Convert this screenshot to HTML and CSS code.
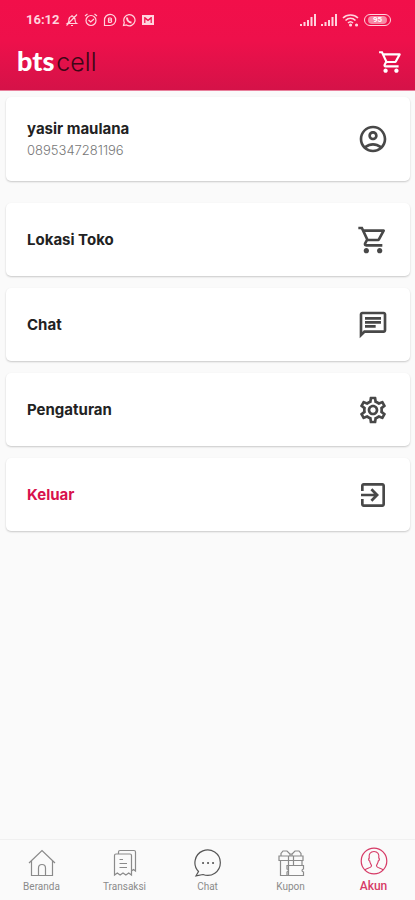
FILE: index.html
```html
<!DOCTYPE html>
<html lang="id">
<head>
  <meta charset="UTF-8" />
  <meta name="viewport" content="width=device-width, initial-scale=1.0"/>
  <title>Akun</title>
  <link rel="stylesheet" href="styles.css">
</head>
<body>
  <svg width="0" height="0" class="sprite" aria-hidden="true">
    <symbol id="cart" viewBox="0 0 24 24">
      <path d="M15.55 13c.75 0 1.41-.41 1.75-1.03l3.58-6.49A.996.996 0 0 0 20.01 4H5.21l-.94-2H1v2h2l3.6 7.59-1.35 2.44C4.52 15.37 5.48 17 7 17h12v-2H7l1.1-2h7.45zM6.16 6h12.15l-2.76 5H8.53L6.16 6zM7 18c-1.1 0-1.99.9-1.99 2S5.9 22 7 22s2-.9 2-2-.9-2-2-2zm10 0c-1.1 0-1.99.9-1.99 2s.89 2 1.99 2 2-.9 2-2-.9-2-2-2z"/>
    </symbol>
    <symbol id="signal" viewBox="0 0 16 12">
      <path d="M0 10h2v2H0zM3.500 8h2v4h-2zM7 6h2v6H7zM10.500 3h2v9h-2zM14 0h2v12h-2z"/>
    </symbol>
  </svg>

  <header class="header">
    <div class="status">
      <div class="status-group">
        <span class="time">16:12</span>
        <svg class="status-icon" viewBox="0 0 14 14"><path d="M2.500 10.500C4 9.500 4 8 4 6.500a3 3 0 0 1 6 0c0 1.500 0 3 1.500 4zM6 12.500h2M7 2v1.500M1.500 12.500L12 1.500"/></svg>
        <svg class="status-icon" viewBox="0 0 14 14"><circle cx="7" cy="7.500" r="5"/><path d="M1 3l2.500-2M13 3l-2.500-2M4.500 7l2.200 2L10 6"/></svg>
        <svg class="status-icon" viewBox="0 0 14 14"><path d="M1.500 12.500V7A5.600 5.600 0 1 1 7 12.500z"/><path d="M5.500 5v4.500M5.500 5h2a1 1 0 0 1 0 2h-2M7.500 7a1 1 0 0 1 0 2.300h-2"/></svg>
        <svg class="status-icon" viewBox="0 0 14 14"><path d="M1.500 12.500l.8-3A5.600 5.600 0 1 1 4.500 12z"/><path class="thick" d="M5 4.500c0 3 2 5 4.500 5M5 4.500v1M9.500 9.500h-1"/></svg>
        <svg class="status-icon solid" viewBox="0 0 14 14"><path fill-rule="evenodd" d="M1 2h12v10H1zM3.200 4v6h1.200V6.200L7 8.300l2.600-2.100V10h1.200V4H10L7 6.500 4 4z"/></svg>
      </div>
      <div class="status-group">
        <svg class="signal"><use href="#signal"/></svg>
        <svg class="signal"><use href="#signal"/></svg>
        <svg class="wifi" viewBox="0 0 17 14"><path d="M1 5C5 1 12 1 16 5M3.500 7.500c3-3 7-3 10 0M6 10c1.500-1.500 3.500-1.500 5 0"/><path class="dot" d="M8.500 12h.1M14.500 12h.1"/></svg>
        <span class="battery"><span class="battery-level">95</span></span>
      </div>
    </div>
    <div class="topbar">
      <a href="#" class="logo"><b>bts</b><span>cell</span></a>
      <button class="cart-button" aria-label="Keranjang"><svg><use href="#cart"/></svg></button>
    </div>
  </header>

  <main class="content">
    <a href="#" class="card profile">
      <div>
        <div class="name">yasir maulana</div>
        <div class="phone">0895347281196</div>
      </div>
      <svg viewBox="0 0 24 24"><path d="M12 2C6.480 2 2 6.480 2 12s4.480 10 10 10 10-4.480 10-10S17.520 2 12 2zM7.350 18.500C8.660 17.560 10.260 17 12 17s3.340.560 4.650 1.500C15.340 19.440 13.740 20 12 20s-3.340-.560-4.650-1.500zm10.790-1.380C16.450 15.800 14.320 15 12 15s-4.450.800-6.140 2.120C4.700 15.730 4 13.950 4 12c0-4.420 3.580-8 8-8s8 3.580 8 8c0 1.950-.7 3.730-1.860 5.120zM12 6c-1.930 0-3.500 1.570-3.500 3.500S10.070 13 12 13s3.500-1.570 3.500-3.500S13.930 6 12 6zm0 5c-.83 0-1.500-.67-1.500-1.500S11.170 8 12 8s1.500.67 1.500 1.500S12.830 11 12 11z"/></svg>
    </a>
    <a href="#" class="card">
      <span class="name">Lokasi Toko</span>
      <svg><use href="#cart"/></svg>
    </a>
    <a href="#" class="card">
      <span class="name">Chat</span>
      <svg viewBox="0 0 24 24"><path d="M4 4h16v12H5.170L4 17.170V4m0-2c-1.100 0-1.990.9-1.990 2L2 22l4-4h14c1.100 0 2-.9 2-2V4c0-1.100-.9-2-2-2H4zm2 10h8v2H6v-2zm0-3h12v2H6V9zm0-3h12v2H6V6z"/></svg>
    </a>
    <a href="#" class="card">
      <span class="name">Pengaturan</span>
      <svg viewBox="0 0 24 24"><path d="M19.430 12.980c.04-.32.07-.64.07-.98s-.03-.66-.07-.98l2.110-1.650c.19-.15.240-.42.120-.64l-2-3.460a.5.5 0 0 0-.61-.22l-2.490 1c-.52-.4-1.080-.73-1.690-.98l-.38-2.650A.488.488 0 0 0 14 2h-4c-.25 0-.46.180-.49.420l-.38 2.650c-.61.250-1.170.590-1.690.980l-2.490-1a.566.566 0 0 0-.18-.03c-.17 0-.34.090-.43.250l-2 3.460c-.13.220-.07.490.12.640l2.110 1.650c-.04.320-.07.650-.07.980s.03.660.07.980l-2.110 1.650c-.19.150-.24.420-.12.640l2 3.460a.5.5 0 0 0 .61.220l2.490-1c.52.400 1.080.730 1.690.980l.38 2.650c.03.240.24.420.49.420h4c.25 0 .46-.18.490-.42l.38-2.650c.61-.25 1.170-.59 1.690-.98l2.490 1c.06.020.12.030.18.030.17 0 .34-.09.430-.25l2-3.460c.12-.22.070-.49-.12-.64l-2.110-1.650zm-1.980-1.710c.04.310.05.520.05.730s-.02.430-.05.730l-.14 1.130.89.700 1.080.84-.7 1.210-1.270-.51-1.040-.42-.9.680c-.43.320-.84.560-1.250.73l-1.060.43-.16 1.130-.2 1.350h-1.400l-.19-1.350-.16-1.130-1.060-.43c-.43-.18-.83-.41-1.230-.71l-.91-.7-1.060.43-1.270.51-.7-1.210 1.080-.84.890-.7-.14-1.130c-.03-.31-.05-.54-.05-.74s.02-.43.050-.73l.14-1.130-.89-.7-1.080-.84.7-1.210 1.270.51 1.040.42.900-.68c.43-.32.840-.56 1.250-.73l1.060-.43.160-1.130.200-1.350h1.390l.19 1.350.160 1.130 1.060.43c.43.180.83.410 1.230.71l.91.7 1.060-.43 1.270-.51.7 1.210-1.070.85-.89.7.14 1.130zM12 8c-2.210 0-4 1.790-4 4s1.790 4 4 4 4-1.790 4-4-1.790-4-4-4zm0 6c-1.100 0-2-.9-2-2s.9-2 2-2 2 .9 2 2-.9 2-2 2z"/></svg>
    </a>
    <a href="#" class="card logout">
      <span class="name">Keluar</span>
      <svg viewBox="0 0 24 24"><path d="M10.090 15.590L11.500 17l5-5-5-5-1.410 1.410L12.670 11H3v2h9.670l-2.580 2.590zM19 3H5c-1.110 0-2 .9-2 2v4h2V5h14v14H5v-4H3v4c0 1.100.890 2 2 2h14c1.100 0 2-.9 2-2V5c0-1.100-.9-2-2-2z"/></svg>
    </a>
  </main>

  <nav class="nav">
    <a href="#">
      <svg viewBox="0 0 28 28"><path d="M1 14L14 1.500 27 14M3.500 12v14.500h21V12M10.500 26.500V19a3.500 3.500 0 0 1 7 0v7.500"/></svg>
      <span>Beranda</span>
    </a>
    <a href="#">
      <svg viewBox="0 0 28 28"><path d="M3.500 6.500a1.500 1.500 0 0 1 1.500-1.500h14a1.500 1.500 0 0 1 1.500 1.500v19.500l-2.800-2-2.800 2-2.900-2-2.900 2-2.800-2-2.800 2zM7.500 5V3A1.500 1.500 0 0 1 9 1.500h14A1.500 1.500 0 0 1 24.500 3v19l-2-1.500-2 1.500M8.500 10.500H12M8.500 14.500h7.500M8.500 18.500h7.500"/></svg>
      <span>Transaksi</span>
    </a>
    <a href="#">
      <svg class="dark" viewBox="0 0 28 28"><path d="M4.500 22.500A12.700 12.700 0 1 1 9 25.500l-7 1.300z"/><path class="dots" d="M9 14h.1M14 14h.1M19 14h.1"/></svg>
      <span>Chat</span>
    </a>
    <a href="#">
      <svg viewBox="0 0 28 28"><path d="M2 7h24v4.500H2zM3.500 11.500v15H10M11.500 7v19.500M16.500 7v9M25 11.500V16M4 7V4.500L6 2h4l3 3v2M24 7V4.500L22 2h-4l-3 3v2M13 5h2"/><path d="M10 16.500h16.500V20c-2 .5-2 2.500 0 3v3.500H10V23c2-.5 2-2.500 0-3z"/></svg>
      <span>Kupon</span>
    </a>
    <a href="#" class="active">
      <svg viewBox="0 0 28 28"><circle cx="14" cy="14" r="12.800"/><path d="M5 23c1-2 6-1.500 6.500-4 .2-1-1.500-2.500-1.800-5-1.500-.8-1-2.500-.5-3C8.500 7 10.500 4.500 14 4.500S19.500 7 18.800 11c.7.500 1 2.200-.5 3-.3 2.500-2 4-1.800 5 .5 2.500 5.500 2 6.500 4"/></svg>
      <span>Akun</span>
    </a>
  </nav>
</body>
</html>
```

FILE: styles.css
```css
* { box-sizing: border-box; }
body {
  margin: 0;
  min-height: 100vh;
  display: flex;
  flex-direction: column;
  background-color: #fafafa;
  font-family: Roboto, sans-serif;
  color: #222;
}
a {
  color: inherit;
  text-decoration: none;
}
svg {
  display: block;
  flex-shrink: 0;
}
.sprite { position: absolute; }

.header {
  padding-top: 12px;
  background: linear-gradient(#f20f4a, #ee104b 45%, #d51248);
  border-bottom: 1px solid #e8809c;
  color: white;
}
.status {
  display: flex;
  justify-content: space-between;
  align-items: center;
  height: 16px;
  padding: 0 24px 0 26px;
  color: #ffd3dd;
}
.status-group {
  display: flex;
  align-items: center;
  gap: 5px;
}
.time {
  font-size: 13px;
  font-weight: 700;
  line-height: 16px;
}
.status-icon {
  width: 14px;
  height: 14px;
  fill: none;
  stroke: currentColor;
  stroke-width: 1.2;
}
.status-icon .thick { stroke-width: 2; }
.status-icon.solid { fill: currentColor; stroke: none; }
.signal {
  width: 16px;
  height: 12px;
  fill: currentColor;
}
.wifi {
  width: 17px;
  height: 14px;
  fill: none;
  stroke: currentColor;
  stroke-width: 1.6;
}
.wifi .dot {
  stroke-width: 3;
  stroke-linecap: round;
}
.battery {
  width: 27px;
  height: 12px;
  padding: 1px 3px;
  border: 1px solid currentColor;
  border-radius: 6px;
}
.battery-level {
  display: block;
  border-radius: 4px;
  background-color: rgba(255, 255, 255, 0.5);
  color: white;
  font-size: 8px;
  font-weight: 700;
  line-height: 8px;
  text-align: center;
}

.topbar {
  display: flex;
  justify-content: space-between;
  align-items: center;
  padding: 17px 11px 12px 17px;
}
.logo {
  display: flex;
  align-items: baseline;
  gap: 2px;
  font-family: Lato, sans-serif;
  font-size: 27px;
  line-height: 32px;
}
.logo b { font-weight: 900; }
.logo span {
  font-family: Inter, sans-serif;
  font-size: 25px;
  font-weight: 300;
  color: #3c0716;
}
.cart-button {
  padding: 0;
  border: none;
  background: none;
  color: white;
  cursor: pointer;
}
.cart-button svg {
  width: 26px;
  height: 26px;
  fill: currentColor;
}

.content {
  flex: 1;
  display: flex;
  flex-direction: column;
  gap: 12px;
  padding: 6px 5px 12px 6px;
}
.card {
  display: flex;
  justify-content: space-between;
  align-items: center;
  min-height: 73px;
  padding: 0 21px;
  background-color: white;
  border-radius: 5px;
  box-shadow: 0 1px 2px rgba(0,0,0,0.2);
}
.card svg {
  width: 32px;
  height: 32px;
  fill: #484848;
}
.profile {
  min-height: 84px;
  margin-bottom: 10px;
}
.name {
  font-family: Inter, sans-serif;
  font-size: 15px;
  font-weight: 700;
  line-height: 22px;
}
.phone {
  font-family: Inter, sans-serif;
  font-size: 13px;
  font-weight: 300;
  line-height: 20px;
  color: #777;
}
.logout .name { color: #d8124d; }

.nav {
  display: flex;
  height: 61px;
  border-top: 1px solid #f0f0f0;
}
.nav a {
  flex: 1;
  display: flex;
  flex-direction: column;
  align-items: center;
  gap: 2px;
  padding-top: 9px;
  font-size: 10px;
  line-height: 16px;
  color: #8a8a8a;
}
.nav svg {
  width: 28px;
  height: 28px;
  fill: none;
  stroke: currentColor;
  stroke-width: 1.2;
}
.nav .dark { stroke: #555; }
.nav .dots {
  stroke-width: 2;
  stroke-linecap: round;
}
.nav .active {
  padding-top: 7px;
  font-size: 12px;
  font-weight: 500;
  line-height: 18px;
  color: #d63a66;
}
```
